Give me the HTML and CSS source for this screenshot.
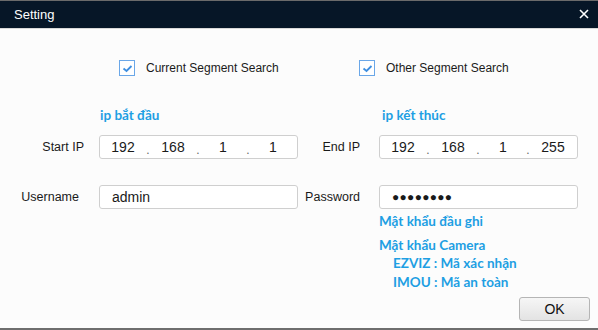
FILE: index.html
```html
<!DOCTYPE html>
<html lang="vi">
<head>
<meta charset="utf-8">
<title>Setting</title>
<link rel="stylesheet" href="styles.css">
</head>
<body>
<div class="dialog">
  <div class="titlebar">
    <span class="title">Setting</span>
    <svg class="close" width="10" height="10" viewBox="0 0 10 10"><path d="M1 1L9 9M9 1L1 9" stroke="#fff" stroke-width="1.6" fill="none"/></svg>
  </div>
  <div class="content">
    <div class="checks">
      <label class="check first"><span class="box"><svg width="11" height="9" viewBox="0 0 11 9"><path d="M1.5 4.5L4.5 7L9.5 2" stroke="#3d8ee0" stroke-width="1.8" fill="none"/></svg></span>Current Segment Search</label>
      <label class="check"><span class="box"><svg width="11" height="9" viewBox="0 0 11 9"><path d="M1.5 4.5L4.5 7L9.5 2" stroke="#3d8ee0" stroke-width="1.8" fill="none"/></svg></span>Other Segment Search</label>
    </div>
    <div class="form">
      <div class="cap"></div>
      <div class="cap note start">ip bắt đầu</div>
      <div class="cap"></div>
      <div class="cap note end">ip kết thúc</div>

      <div class="label">Start IP</div>
      <div class="field ip"><span class="seg">192</span><span class="dot">.</span><span class="seg">168</span><span class="dot">.</span><span class="seg">1</span><span class="dot">.</span><span class="seg">1</span></div>
      <div class="label l2">End IP</div>
      <div class="field ip"><span class="seg">192</span><span class="dot">.</span><span class="seg">168</span><span class="dot">.</span><span class="seg">1</span><span class="dot">.</span><span class="seg">255</span></div>

      <div class="label user">Username</div>
      <div class="field text">admin</div>
      <div class="label l2">Password</div>
      <div class="field text pw">●●●●●●●●</div>

      <div class="notes">
        <div class="note n1">Mật khẩu đầu ghi</div>
        <div class="note n2">Mật khẩu Camera</div>
        <div class="note n3">EZVIZ : Mã xác nhận</div>
        <div class="note n3">IMOU : Mã an toàn</div>
      </div>
    </div>
    <div class="footer"><button class="ok">OK</button></div>
  </div>
</div>
</body>
</html>
```
FILE: styles.css
```css
html, body {
  margin: 0;
  padding: 0;
}
body {
  width: 598px;
  height: 330px;
  overflow: hidden;
  background: #fcfcfc;
  font-family: "Liberation Sans", Arial, sans-serif;
  color: #1a1a1a;
}
.dialog {
  height: 330px;
  box-sizing: border-box;
  border-top: 1px solid #6a6a6a;
  border-bottom: 2px solid #6e6e6e;
  display: flex;
  flex-direction: column;
}
.titlebar {
  height: 27px;
  background: #061627;
  border-bottom: 1px solid #d8d8d8;
  display: flex;
  align-items: center;
  justify-content: space-between;
  padding: 0 9px 0 14px;
}
.title {
  color: #fff;
  font-size: 13px;
  margin-top: -1px;
}
.close {
  display: block;
  margin-top: -1px;
}
.content {
  flex: 1;
  display: flex;
  flex-direction: column;
}
.checks {
  display: flex;
  margin-top: 31px;
  padding-left: 119px;
  height: 16px;
}
.check {
  display: flex;
  align-items: center;
  font-size: 12px;
  color: #1a1a1a;
}
.check.first {
  width: 240px;
}
.box {
  width: 14px;
  height: 14px;
  border: 1px solid #6aa7e8;
  background: #fff;
  display: flex;
  align-items: center;
  justify-content: center;
  margin-right: 11px;
}
.box svg {
  display: block;
}
.form {
  display: grid;
  grid-template-columns: 99px 199px 81px 199px;
  grid-template-rows: 16px 36px 50px auto;
  margin-top: 31px;
}
.note {
  color: #1e9fe3;
  font-family: Lato, "Open Sans", sans-serif;
  font-weight: 700;
  font-size: 13.5px;
  line-height: 16px;
  white-space: nowrap;
}
.cap.start {
  padding-left: 1px;
}
.cap.end {
  padding-left: 3px;
}
.label {
  font-size: 12.5px;
  text-align: right;
  padding-right: 15px;
  align-self: end;
  line-height: 24px;
  height: 24px;
}
.label.user {
  padding-right: 20px;
}
.label.l2 {
  padding-right: 19px;
}
.field {
  box-sizing: border-box;
  height: 24px;
  align-self: end;
  border: 1px solid #cfcfcf;
  border-radius: 3px;
  background: #fff;
  font-size: 14px;
}
.ip {
  display: flex;
  align-items: center;
}
.seg {
  width: 46px;
  text-align: center;
}
.dot {
  width: 4px;
  text-align: center;
  color: #666;
  font-size: 12px;
  margin-top: 5px;
}
.text {
  display: flex;
  align-items: center;
  padding-left: 12px;
}
.pw {
  padding-left: 12px;
  font-size: 12px;
  letter-spacing: 0.3px;
  font-family: "Liberation Sans", "DejaVu Sans", sans-serif;
}
.notes {
  grid-column: 4;
  padding-top: 3px;
}
.notes .note {
  line-height: 18px;
}
.notes .n2 {
  margin-top: 6px;
}
.notes .n3 {
  padding-left: 14px;
  line-height: 19px;
}
.footer {
  display: flex;
  justify-content: flex-end;
  padding-right: 8px;
  margin-top: 5px;
}
.ok {
  width: 71px;
  height: 24px;
  border: 1px solid #b5b5b5;
  border-radius: 3px;
  background: linear-gradient(#f6f6f6, #e3e3e3);
  font-family: "Liberation Sans", Arial, sans-serif;
  font-size: 14px;
  color: #111;
  padding: 0;
}
```
